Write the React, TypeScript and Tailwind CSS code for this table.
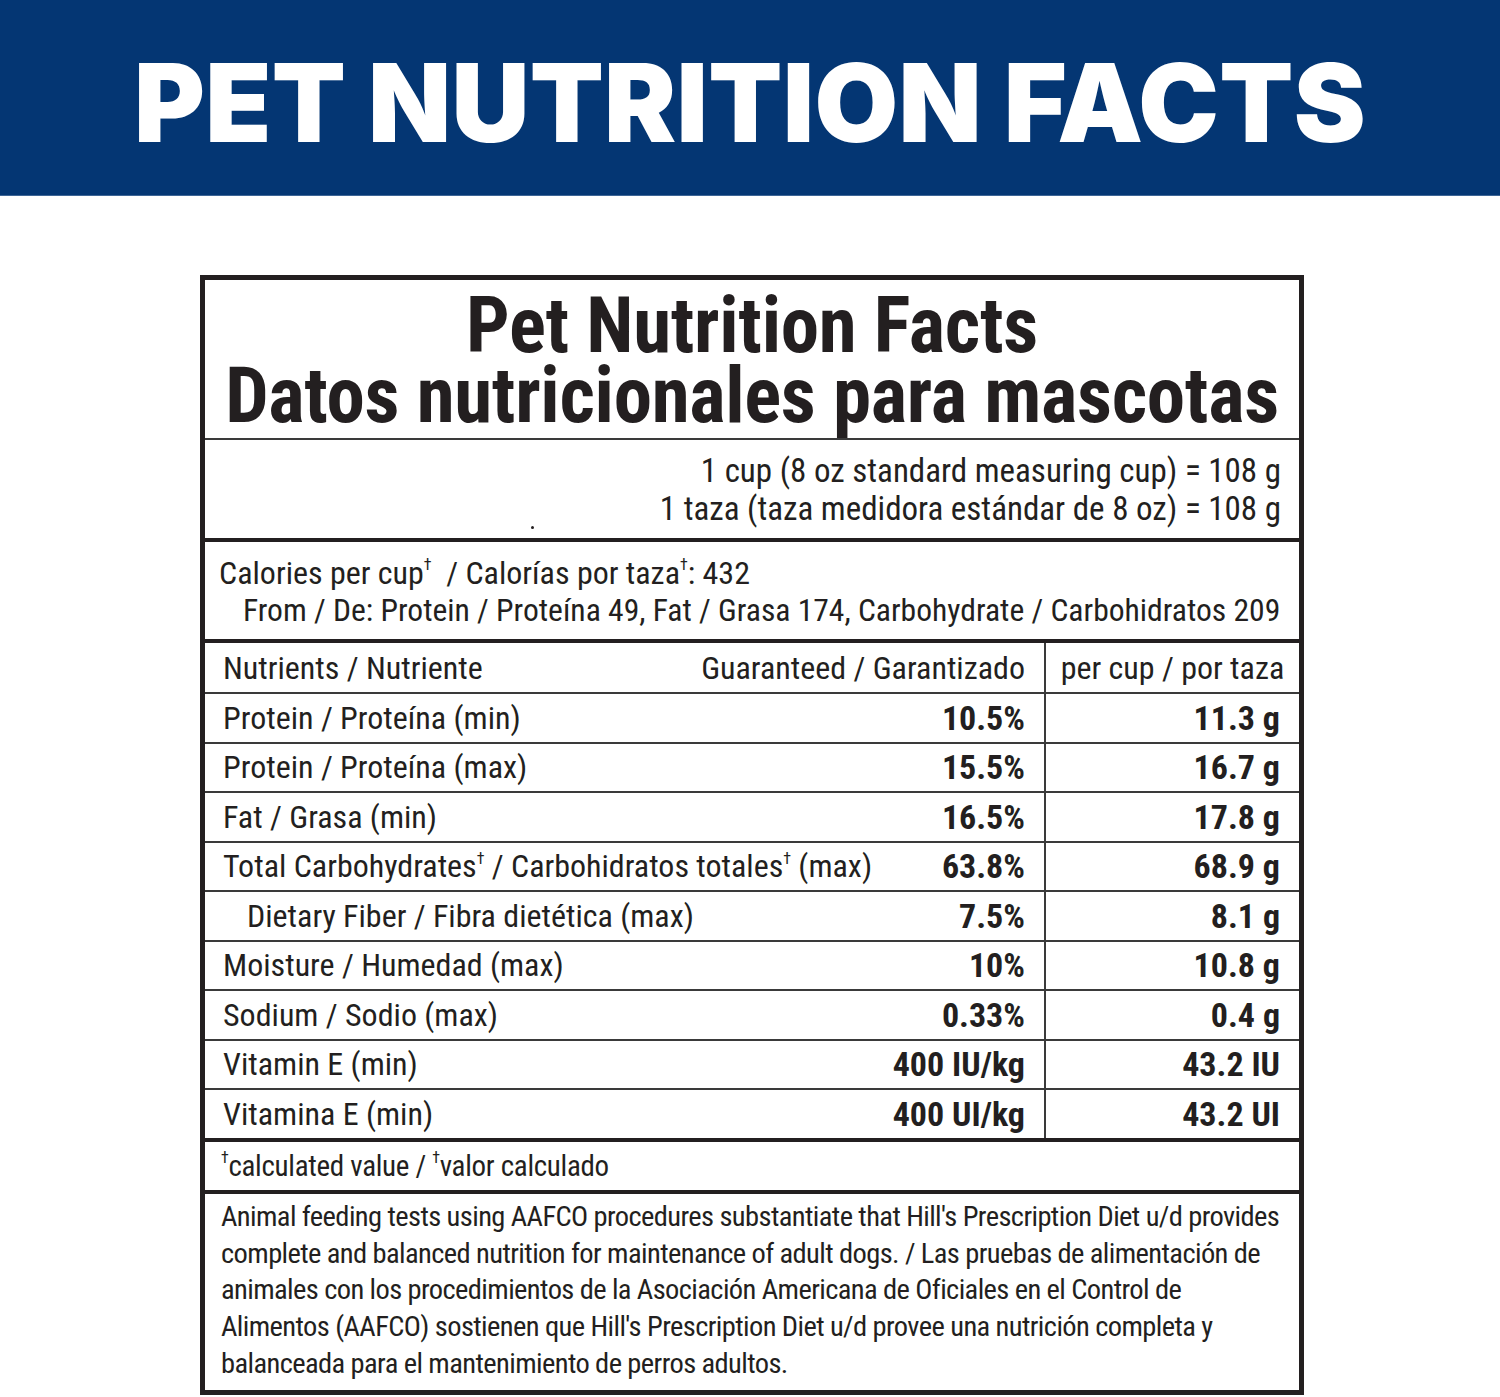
const ROWS = [
  { name: 'Protein / Proteína (min)', pct: '10.5%', cup: '11.3 g' },
  { name: 'Protein / Proteína (max)', pct: '15.5%', cup: '16.7 g' },
  { name: 'Fat / Grasa (min)', pct: '16.5%', cup: '17.8 g' },
  { name: 'carbs', pct: '63.8%', cup: '68.9 g' },
  { name: 'Dietary Fiber / Fibra dietética (max)', pct: '7.5%', cup: '8.1 g', indent: true },
  { name: 'Moisture / Humedad (max)', pct: '10%', cup: '10.8 g' },
  { name: 'Sodium / Sodio (max)', pct: '0.33%', cup: '0.4 g' },
  { name: 'Vitamin E (min)', pct: '400 IU/kg', cup: '43.2 IU' },
  { name: 'Vitamina E (min)', pct: '400 UI/kg', cup: '43.2 UI' },
];

function Dagger() {
  return <sup className="relative -top-[2px] text-[16px] align-super leading-none">†</sup>;
}

export default function App() {
  return (
    <div className="min-h-[1397px] w-[1500px] bg-white font-['Roboto_Condensed',Roboto,sans-serif] text-[#231f20]">
      <header className="h-[196px] border-b border-[#3d6596] bg-[#043673] pt-[49px] text-center">
        <h1 className="font-['Inter',sans-serif] text-[108px] font-black leading-none tracking-[0.3px] text-white">
          PET NUTRITION FACTS
        </h1>
      </header>

      <div className="ml-[200px] mt-[79px] w-[1104px] border-[5px] border-[#231f20]">
        <div className="h-[160px] border-b-2 border-[#3a3a3a] pt-[11px] text-center text-[77px] font-bold leading-[70px] tracking-[-0.3px]">
          <div>Pet Nutrition Facts</div>
          <div>Datos nutricionales para mascotas</div>
        </div>

        <div className="relative h-[102px] border-b-4 border-[#231f20] pr-[18px] pt-[12px] text-right text-[33px] leading-[38px]">
          <div>1 cup (8 oz standard measuring cup) = 108 g</div>
          <div>1 taza (taza medidora estándar de 8 oz) = 108 g</div>
          <span className="absolute left-[326px] top-[86px] h-[3px] w-[3px] rounded-full bg-[#231f20]" />
        </div>

        <div className="h-[101px] border-b-4 border-[#231f20] pl-[14px] pt-[13px] text-[32px] leading-[37px]">
          <div>
            Calories per cup<Dagger />&nbsp; / Calorías por taza<Dagger />: 432
          </div>
          <div className="pl-[24px] text-[31.6px]">
            From / De: Protein / Proteína 49, Fat / Grasa 174, Carbohydrate / Carbohidratos 209
          </div>
        </div>

        <div className="grid grid-cols-[841px_1fr]">
          <div className="flex h-[51px] items-center justify-between border-b-2 border-r-2 border-[#3a3a3a] pl-[18px] pr-[19px] text-[32px] leading-none">
            <span>Nutrients / Nutriente</span>
            <span>Guaranteed / Garantizado</span>
          </div>
          <div className="flex h-[51px] items-center justify-center border-b-2 border-[#3a3a3a] text-[32px] leading-none">
            per cup / por taza
          </div>

          {ROWS.map((r, i) => {
            const last = i === ROWS.length - 1;
            return [
              <div
                key={`l${i}`}
                className={`flex items-center justify-between border-r-2 border-[#3a3a3a] pr-[19px] text-[32px] leading-none ${
                  r.indent ? 'pl-[42px]' : 'pl-[18px]'
                } ${last ? 'h-[48px]' : 'h-[49.5px] border-b-2'}`}
              >
                <span>
                  {r.name === 'carbs' ? (
                    <>
                      Total Carbohydrates<Dagger /> / Carbohidratos totales<Dagger /> (max)
                    </>
                  ) : (
                    r.name
                  )}
                </span>
                <span className="text-[34px] font-bold">{r.pct}</span>
              </div>,
              <div
                key={`r${i}`}
                className={`flex items-center justify-end border-[#3a3a3a] pr-[19px] text-[34px] font-bold leading-none ${
                  last ? 'h-[48px]' : 'h-[49.5px] border-b-2'
                }`}
              >
                {r.cup}
              </div>,
            ];
          })}
        </div>

        <div className="flex h-[56px] items-center border-y-4 border-[#231f20] pl-[16px] text-[29px] leading-none tracking-[-0.3px]">
          <span>
            <Dagger />calculated value / <Dagger />valor calculado
          </span>
        </div>

        <div className="h-[196px] whitespace-nowrap pl-[16px] pt-[5px] text-[28.5px] leading-[36.7px] tracking-[-0.6px]">
          Animal feeding tests using AAFCO procedures substantiate that Hill's Prescription Diet u/d provides
          <br />
          complete and balanced nutrition for maintenance of adult dogs. / Las pruebas de alimentación de
          <br />
          animales con los procedimientos de la Asociación Americana de Oficiales en el Control de
          <br />
          Alimentos (AAFCO) sostienen que Hill's Prescription Diet u/d provee una nutrición completa y
          <br />
          balanceada para el mantenimiento de perros adultos.
        </div>
      </div>
    </div>
  );
}
